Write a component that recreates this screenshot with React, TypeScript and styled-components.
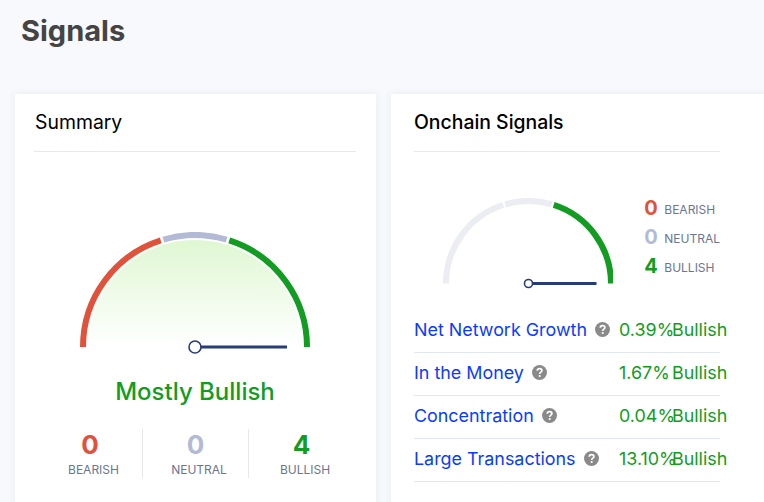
import styled, { createGlobalStyle } from 'styled-components';

const GREEN = '#129c22';
const RED = '#e0533a';
const GREY = '#b2bad6';
const NAVY = '#283c78';
const TRACK = '#ecedf3';

const GlobalStyle = createGlobalStyle`
    html, body {
        margin: 0;
        height: 100%;
        overflow: hidden;
        background-color: #f8f9fc;
        font-family: Inter, "Liberation Sans", sans-serif;
    }
`;

const polar = (cx: number, cy: number, r: number, deg: number) => {
    const rad = (deg * Math.PI) / 180;
    return [cx - r * Math.cos(rad), cy - r * Math.sin(rad)];
};

const arcPath = (cx: number, cy: number, r: number, from: number, to: number) => {
    const [x1, y1] = polar(cx, cy, r, from);
    const [x2, y2] = polar(cx, cy, r, to);
    return `M ${x1} ${y1} A ${r} ${r} 0 0 1 ${x2} ${y2}`;
};

interface GaugeProps {
    size: number;
    stroke: number;
    colors: string[];
    knob: number;
    needle: number;
    filled?: boolean;
}

const Gauge = ({ size, stroke, colors, knob, needle, filled }: GaugeProps) => {
    const cx = size / 2;
    const cy = size / 2;
    const r = size / 2 - stroke / 2;
    const segments: [number, number][] = [
        [0, 72.2],
        [73.6, 106.4],
        [107.8, 180],
    ];

    return (
        <svg width={size} height={cy + knob + 2}>
            <defs>
                <linearGradient id="gaugeFill" x1="0" y1="0" x2="0" y2="1">
                    <stop offset="0" stopColor="#dff7d2" />
                    <stop offset="1" stopColor="#ffffff" />
                </linearGradient>
            </defs>
            {filled && (
                <path
                    d={`M ${cx - r + 5} ${cy} A ${r - 5} ${r - 5} 0 0 1 ${cx + r - 5} ${cy} Z`}
                    fill="url(#gaugeFill)"
                />
            )}
            {segments.map(([from, to], i) => (
                <path
                    key={from}
                    d={arcPath(cx, cy, r, from, to)}
                    fill="none"
                    stroke={colors[i]}
                    strokeWidth={stroke}
                />
            ))}
            <line x1={cx} y1={cy} x2={cx + needle} y2={cy} stroke={NAVY} strokeWidth={3} />
            <circle cx={cx} cy={cy} r={knob} fill="#fff" stroke={NAVY} strokeWidth={1.6} />
        </svg>
    );
};

const HelpIcon = () => (
    <svg width="15" height="15" viewBox="0 0 15 15">
        <circle cx="7.5" cy="7.5" r="7.5" fill="#8a8a8a" />
        <path
            d="M5.2 5.8 C5.3 4.4 6.3 3.7 7.6 3.7 C9 3.7 9.9 4.5 9.9 5.6 C9.9 7.2 7.7 7.2 7.7 8.9"
            fill="none"
            stroke="#fff"
            strokeWidth="1.7"
        />
        <circle cx="7.7" cy="11" r="1.1" fill="#fff" />
    </svg>
);

const stats = [
    { label: 'Bearish', count: 0, color: RED },
    { label: 'Neutral', count: 0, color: GREY },
    { label: 'Bullish', count: 4, color: GREEN },
];

const rows = [
    { name: 'Net Network Growth', value: '0.39%' },
    { name: 'In the Money', value: '1.67%' },
    { name: 'Concentration', value: '0.04%' },
    { name: 'Large Transactions', value: '13.10%' },
];

const App = () => (
    <StyledPage>
        <GlobalStyle />
        <StyledTitle>Signals</StyledTitle>
        <StyledCards>
            <StyledSummaryCard>
                <StyledSummaryHeading>Summary</StyledSummaryHeading>
                <StyledSummaryGauge>
                    <Gauge
                        size={230}
                        stroke={6}
                        colors={[RED, GREY, GREEN]}
                        knob={6}
                        needle={92}
                        filled
                    />
                </StyledSummaryGauge>
                <StyledVerdict>Mostly Bullish</StyledVerdict>
                <StyledStats>
                    {stats.map((stat) => (
                        <StyledStat key={stat.label}>
                            <StyledStatCount $color={stat.color}>{stat.count}</StyledStatCount>
                            <StyledStatLabel>{stat.label}</StyledStatLabel>
                        </StyledStat>
                    ))}
                </StyledStats>
            </StyledSummaryCard>
            <StyledOnchainCard>
                <StyledOnchainHeading>Onchain Signals</StyledOnchainHeading>
                <StyledOnchainTop>
                    <Gauge
                        size={171}
                        stroke={6}
                        colors={[TRACK, TRACK, GREEN]}
                        knob={4}
                        needle={68}
                    />
                    <StyledLegend>
                        {stats.map((stat) => (
                            <StyledLegendItem key={stat.label}>
                                <StyledLegendCount $color={stat.color}>{stat.count}</StyledLegendCount>
                                <StyledLegendLabel>{stat.label}</StyledLegendLabel>
                            </StyledLegendItem>
                        ))}
                    </StyledLegend>
                </StyledOnchainTop>
                <div>
                    {rows.map((row) => (
                        <StyledRow key={row.name}>
                            <StyledRowName>
                                <StyledLink>{row.name}</StyledLink>
                                <HelpIcon />
                            </StyledRowName>
                            <StyledRowValue>{row.value}</StyledRowValue>
                            <StyledRowValue>Bullish</StyledRowValue>
                        </StyledRow>
                    ))}
                </div>
            </StyledOnchainCard>
        </StyledCards>
    </StyledPage>
);

const StyledPage = styled.div`
    height: 502px;
    overflow: hidden;
    padding: 12px 0 0 15px;
    box-sizing: border-box;
`;

const StyledTitle = styled.h1`
    margin: 0 0 44px 6px;
    font-size: 29px;
    line-height: 38px;
    font-weight: 700;
    color: #444;
`;

const StyledCards = styled.div`
    display: grid;
    grid-template-columns: 361px 400px;
    gap: 15px;
`;

const StyledCard = styled.section`
    height: 440px;
    box-sizing: border-box;
    background-color: #fff;
    box-shadow: 0 0 8px rgba(40, 60, 120, 0.08);
`;

const StyledSummaryCard = styled(StyledCard)`
    padding: 14px 20px 0 19px;
`;

const StyledOnchainCard = styled(StyledCard)`
    padding: 14px 71px 0 23px;
`;

const StyledHeading = styled.h2`
    margin: 0;
    height: 44px;
    box-sizing: border-box;
    border-bottom: 1px solid #e6e8ec;
    font-size: 19.4px;
    line-height: 28px;
    color: #000;
`;

const StyledSummaryHeading = styled(StyledHeading)`
    font-weight: 400;
    padding-left: 1px;
`;

const StyledOnchainHeading = styled(StyledHeading)`
    font-weight: 500;
`;

const StyledSummaryGauge = styled.div`
    display: flex;
    justify-content: center;
    padding: 80px 0 0 0;
`;

const StyledVerdict = styled.div`
    margin-top: 21px;
    text-align: center;
    font-size: 24px;
    line-height: 32px;
    font-weight: 500;
    color: ${GREEN};
`;

const StyledStats = styled.div`
    display: grid;
    grid-template-columns: 108px 106px 108px;
    margin-top: 21px;
`;

const StyledStat = styled.div`
    display: flex;
    flex-direction: column;
    align-items: center;
    height: 49px;

    &:first-child {
        padding-left: 4px;
    }

    &:last-child {
        padding-right: 2px;
    }

    & + & {
        border-left: 1px solid #e6e8ec;
    }
`;

const StyledStatCount = styled.span<{ $color: string }>`
    font-size: 26px;
    line-height: 32px;
    font-weight: 700;
    color: ${(props) => props.$color};
`;

const StyledStatLabel = styled.span`
    padding: 1px 0 0 7px;
    font-size: 12px;
    line-height: 16px;
    text-transform: uppercase;
    color: #6b7591;
`;

const StyledOnchainTop = styled.div`
    display: flex;
    align-items: flex-start;
    gap: 31px;
    padding: 46px 0 0 29px;
    height: 112px;
`;

const StyledLegend = styled.div`
    display: flex;
    flex-direction: column;
    margin-top: -2px;
    gap: 5px;
`;

const StyledLegendItem = styled.div`
    display: flex;
    align-items: center;
    gap: 8px;
    height: 24px;
    white-space: nowrap;
`;

const StyledLegendCount = styled.span<{ $color: string }>`
    width: 12px;
    font-size: 20px;
    font-weight: 700;
    color: ${(props) => props.$color};
`;

const StyledLegendLabel = styled.span`
    padding-top: 3px;
    font-size: 12px;
    line-height: 16px;
    text-transform: uppercase;
    color: #6b7591;
`;

const StyledRow = styled.div`
    display: grid;
    grid-template-columns: 205px 53px 48px;
    align-items: center;
    height: 43px;
    padding-bottom: 4px;
    box-sizing: border-box;
    border-bottom: 1px solid #e2e6ef;
    font-size: 17.9px;
`;

const StyledRowName = styled.div`
    display: flex;
    align-items: center;
    gap: 8px;
`;

const StyledLink = styled.a`
    color: #0a3cff;
`;

const StyledRowValue = styled.span`
    white-space: nowrap;
    color: ${GREEN};
`;

export default App;
